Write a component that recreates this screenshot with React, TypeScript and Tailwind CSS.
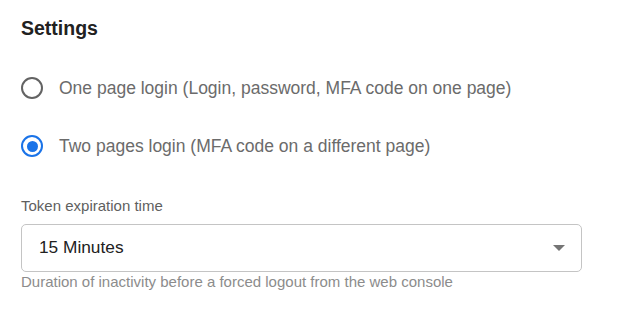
import React, { useState } from "react";

const options = [
  { id: "one", label: "One page login (Login, password, MFA code on one page)" },
  { id: "two", label: "Two pages login (MFA code on a different page)" },
];

const App: React.FC = () => {
  const [mode, setMode] = useState("two");

  return (
    <div className="w-[617px] h-[335px] bg-white font-['Liberation_Sans',Arial,sans-serif] pl-[21px] pr-[35px] pt-[16px]">
      <h2 className="text-[19.5px] font-bold text-[#212121] leading-[24px]">Settings</h2>

      <div className="mt-[36px] flex flex-col gap-[34px]">
        {options.map((opt) => {
          const checked = mode === opt.id;
          return (
            <label
              key={opt.id}
              className="flex items-center h-[24px] gap-[16px] cursor-pointer"
              onClick={() => setMode(opt.id)}
            >
              <span
                className={
                  checked
                    ? "w-[22px] h-[22px] rounded-full border-[2.5px] border-[#1a73e8] flex items-center justify-center"
                    : "w-[22px] h-[22px] rounded-full border-[2.5px] border-[#636363] flex items-center justify-center"
                }
              >
                {checked && <span className="w-[11px] h-[11px] rounded-full bg-[#1a73e8]" />}
              </span>
              <span className="text-[17.5px] text-[#6b6b6b] leading-[24px]">{opt.label}</span>
            </label>
          );
        })}
      </div>

      <div className="mt-[39px]">
        <div className="text-[15px] text-[#5f5f5f] leading-[18px]">Token expiration time</div>
        <div className="mt-[9px] h-[48px] w-[561px] rounded-[5px] border border-[#c4c4c4] flex items-center justify-between pl-[17px] pr-[16px]">
          <span className="text-[17.3px] text-[#212121]">15 Minutes</span>
          <svg width="12" height="6" viewBox="0 0 12 6">
            <path d="M0 0 L6 6 L12 0 Z" fill="#757575" />
          </svg>
        </div>
        <div className="mt-[1px] text-[15px] text-[#8c8c8c] leading-[18px]">
          Duration of inactivity before a forced logout from the web console
        </div>
      </div>
    </div>
  );
};

export default App;
